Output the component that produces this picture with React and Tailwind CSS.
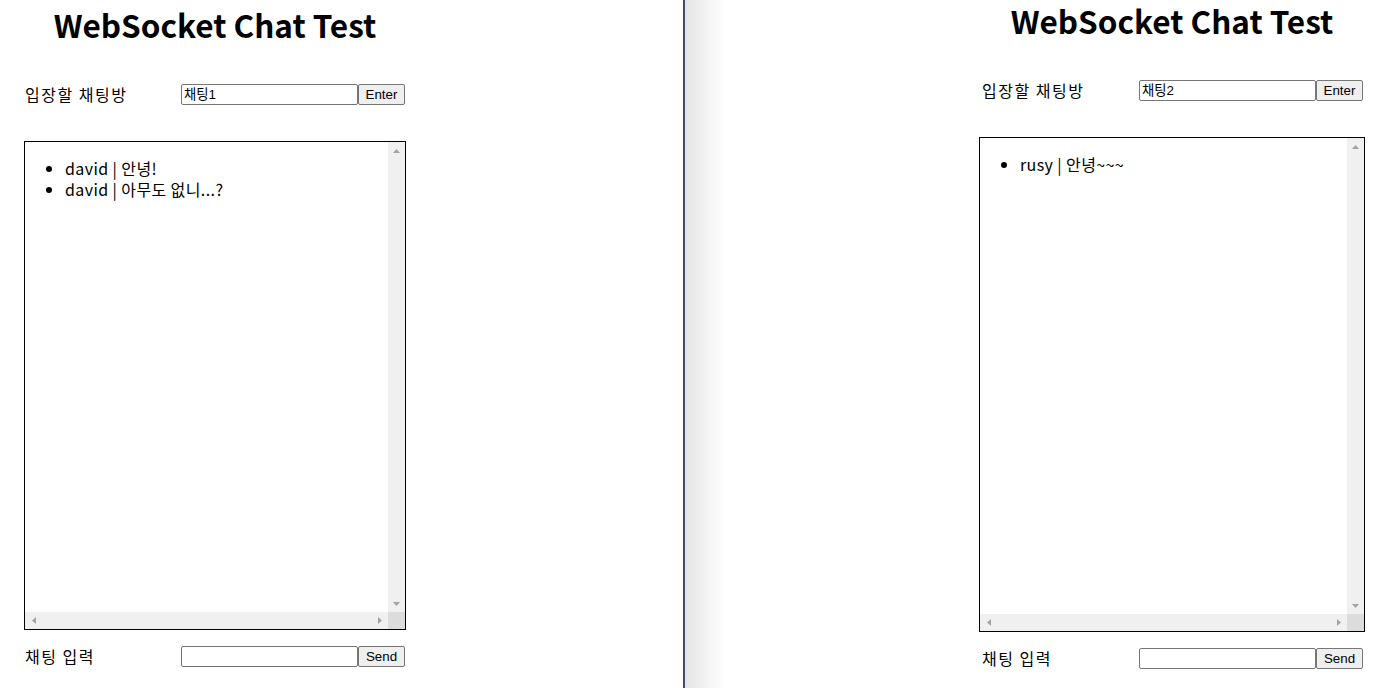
import React from 'react';

const kr = { fontFamily: '"Noto Sans CJK KR", "Noto Sans", sans-serif' };
const ctl = { fontFamily: '"Liberation Sans", "Noto Sans CJK KR", sans-serif' };

function Tri({ dir }) {
    const pts = {
        up: '0,4 7,4 3.5,0',
        down: '0,0 7,0 3.5,4',
        left: '4,0 4,7 0,3.5',
        right: '0,0 0,7 4,3.5',
    }[dir];
    const vertical = dir === 'up' || dir === 'down';
    return (
        <svg width={vertical ? 7 : 4} height={vertical ? 4 : 7} viewBox={vertical ? '0 0 7 4' : '0 0 4 7'}>
            <polygon points={pts} fill="#a3a3a3" />
        </svg>
    );
}

function ChatBox({ height, messages }) {
    return (
        <div className="flex flex-col border border-black bg-white" style={{ height }}>
            <div className="flex flex-1 min-h-0">
                <ul className="flex-1 list-disc pl-[40px] mt-[16px] text-[16px] leading-[21px] tracking-[0.4px] text-black" style={kr}>
                    {messages.map((m, i) => (
                        <li key={i}>{m}</li>
                    ))}
                </ul>
                <div className="w-[17px] bg-[#f0f0f0] flex flex-col justify-between">
                    <div className="h-[17px] flex items-center justify-center"><Tri dir="up" /></div>
                    <div className="h-[17px] flex items-center justify-center"><Tri dir="down" /></div>
                </div>
            </div>
            <div className="h-[17px] flex">
                <div className="flex-1 bg-[#f0f0f0] flex justify-between">
                    <div className="w-[17px] flex items-center justify-center"><Tri dir="left" /></div>
                    <div className="w-[17px] flex items-center justify-center"><Tri dir="right" /></div>
                </div>
                <div className="w-[17px] bg-[#dcdcdc]" />
            </div>
        </div>
    );
}

function Row({ label, value, button, labelW }) {
    return (
        <div className="flex items-center h-[21px]">
            <div className="text-[16px] leading-[21px] tracking-[1.5px] pl-[1px] text-black" style={{ ...kr, width: labelW }}>{label}</div>
            <div className="w-[177px] h-[21px] border border-[#767676] rounded-[2px] bg-white px-[2px] text-[13.33px] leading-[19px] text-black" style={ctl}>{value}</div>
            <div className="w-[47px] h-[21px] border border-[#767676] rounded-[2px] bg-[#efefef] flex items-center justify-center text-[13.33px] text-black" style={ctl}>{button}</div>
        </div>
    );
}

export default function App() {
    return (
        <div className="flex w-[1395px] h-[688px] overflow-hidden bg-white">
            <div className="w-[683px] shrink-0 pl-[24px]">
                <div className="w-[382px]">
                    <h1 className="mt-[4px] text-[31.5px] leading-[40px] font-bold text-center text-black" style={kr}>WebSocket Chat Test</h1>
                    <div className="mt-[40px]">
                        <Row label="입장할 채팅방" value="채팅1" button="Enter" labelW={157} />
                    </div>
                    <div className="mt-[36px]">
                        <ChatBox height={489} messages={['david | 안녕!', 'david | 아무도 없니...?']} />
                    </div>
                    <div className="mt-[16px]">
                        <Row label="채팅 입력" value="" button="Send" labelW={157} />
                    </div>
                </div>
            </div>
            <div className="w-[2px] shrink-0 bg-[#3d4a6b]" />
            <div className="w-[710px] shrink-0 pl-[294px] bg-[linear-gradient(to_right,#e4e4e4,#ffffff_40px)]">
                <div className="w-[386px]">
                    <h1 className="mt-[2px] text-[31.5px] leading-[36px] font-bold text-center text-black" style={kr}>WebSocket Chat Test</h1>
                    <div className="mt-[42px] pl-[2px]">
                        <Row label="입장할 채팅방" value="채팅2" button="Enter" labelW={158} />
                    </div>
                    <div className="mt-[36px]">
                        <ChatBox height={495} messages={['rusy | 안녕~~~']} />
                    </div>
                    <div className="mt-[16px] pl-[2px]">
                        <Row label="채팅 입력" value="" button="Send" labelW={158} />
                    </div>
                </div>
            </div>
        </div>
    );
}
